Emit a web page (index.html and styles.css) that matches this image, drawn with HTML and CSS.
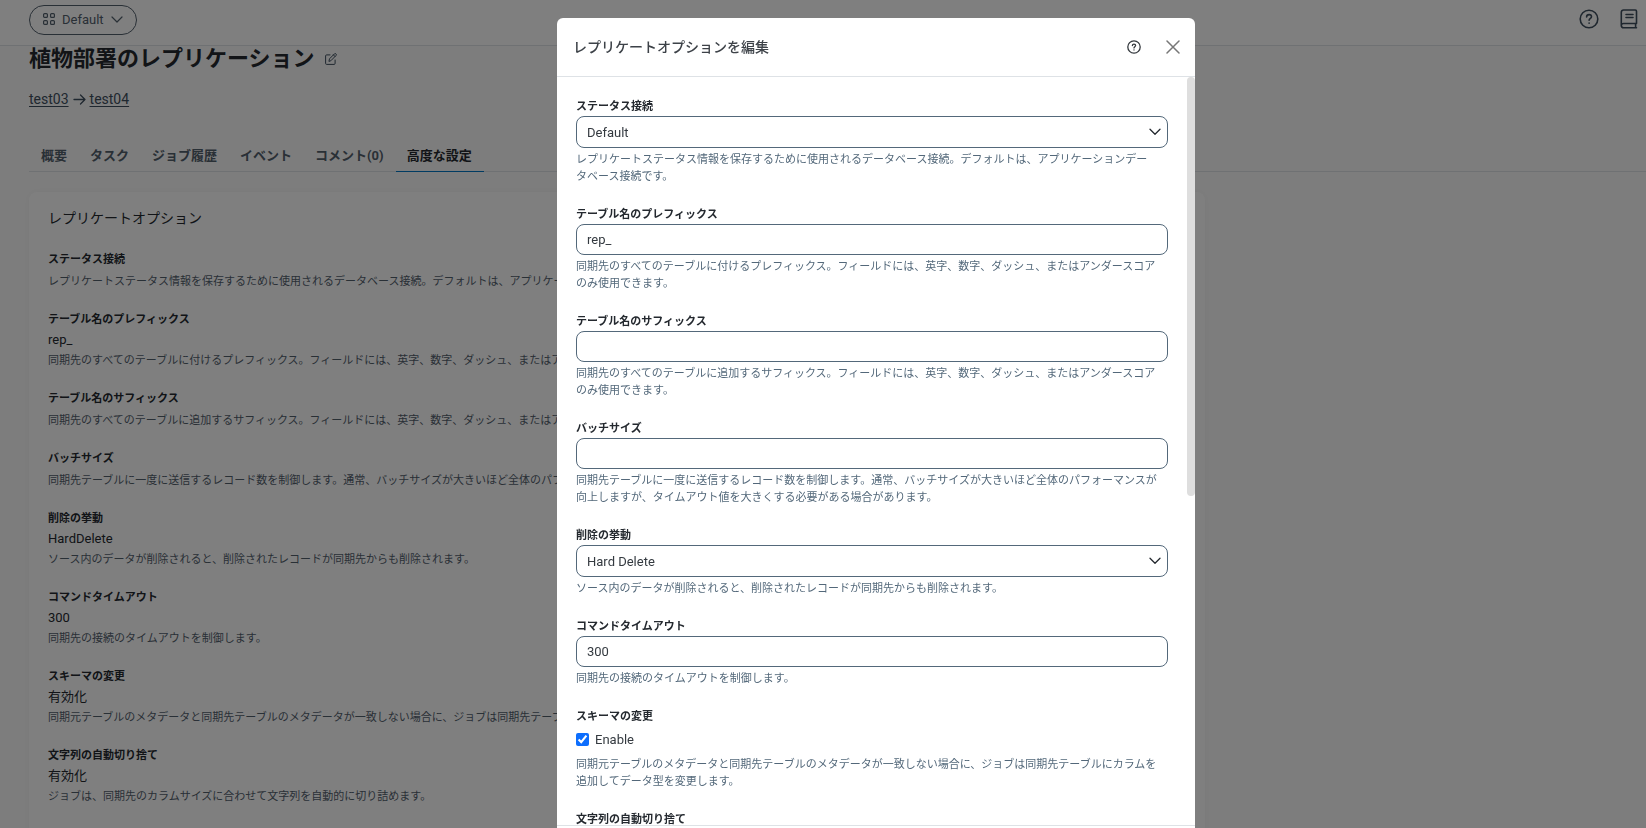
FILE: index.html
```html
<!DOCTYPE html>
<html lang="ja">
<head>
<meta charset="utf-8">
<title>植物部署のレプリケーション</title>
<link rel="stylesheet" href="styles.css">
</head>
<body>
<div class="page">
  <header class="topbar">
    <button class="workspace" type="button">
      <svg width="12" height="12" viewBox="0 0 12 12" fill="none" stroke="currentColor" stroke-width="1.2"><rect x=".6" y=".6" width="3.8" height="3.8" rx="1"/><rect x="7.6" y=".6" width="3.8" height="3.8" rx="1"/><rect x=".6" y="7.6" width="3.8" height="3.8" rx="1"/><rect x="7.6" y="7.6" width="3.8" height="3.8" rx="1"/></svg>
      <span>Default</span>
      <svg width="12" height="12" viewBox="0 0 12 12" fill="none" stroke="currentColor" stroke-width="1.2" stroke-linecap="round" stroke-linejoin="round"><path d="M1 4l5 5 5-5"/></svg>
    </button>
    <div class="topbar-actions">
      <button class="icon-button" type="button" aria-label="ヘルプ">
        <svg width="20" height="20" viewBox="0 0 20 20" fill="none" stroke="currentColor" stroke-width="1.6" stroke-linecap="round"><circle cx="10" cy="10" r="8.8"/><path d="M7.6 7.9c0-1.4 1.1-2.3 2.5-2.3s2.4.9 2.4 2.1c0 1.6-2.4 1.8-2.4 3.6M10.1 14v.3"/></svg>
      </button>
      <button class="icon-button" type="button" aria-label="ドキュメント">
        <svg width="18" height="20" viewBox="0 0 18 20" fill="none" stroke="currentColor" stroke-width="1.6" stroke-linecap="round" stroke-linejoin="round"><path d="M16.5 14.5V2.2a1.2 1.2 0 0 0-1.2-1.2H3.5a2.2 2.2 0 0 0-2.2 2.2v13.3a2.2 2.2 0 0 0 2.2 2.3h13M1.3 16.6a2.2 2.2 0 0 1 2.2-2.1h13M15.6 14.7v4M6 5.5h7M6 8.5h7"/></svg>
      </button>
    </div>
  </header>
  <main class="content">
    <div class="title-row">
      <h1>植物部署のレプリケーション</h1>
      <button class="icon-button" type="button" aria-label="名前を編集">
        <svg width="12" height="12" viewBox="0 0 12 12" fill="none" stroke="currentColor" stroke-linecap="round" stroke-linejoin="round"><path d="M5 1.9H1.6a1 1 0 0 0-1 1v7.5a1 1 0 0 0 1 1h7.5a1 1 0 0 0 1-1V7M4 8l.5-2.2L9.4.9a1 1 0 0 1 1.6 1.6L6.1 7.5zM8.4 1.9l1.6 1.6"/></svg>
      </button>
    </div>
    <div class="route">
      <a href="#source">test03</a>
      <svg width="13" height="13" viewBox="0 0 13 13" fill="none" stroke="currentColor" stroke-width="1.3" stroke-linecap="round" stroke-linejoin="round"><path d="M1 6.5h11M7.5 2l4.5 4.5L7.5 11"/></svg>
      <a href="#target">test04</a>
    </div>
    <nav class="tabs">
      <a href="#t1">概要</a><a href="#t2">タスク</a><a href="#t3">ジョブ履歴</a><a href="#t4">イベント</a><a href="#t5">コメント(0)</a><a class="active" href="#t6">高度な設定</a>
    </nav>
    <div class="columns">
      <section class="card">
        <h2>レプリケートオプション</h2>
        <dl>
          <div class="option"><dt>ステータス接続</dt><dd class="note">レプリケートステータス情報を保存するために使用されるデータベース接続。デフォルトは、アプリケーションデータベース接続です。</dd></div>
          <div class="option"><dt>テーブル名のプレフィックス</dt><dd class="value">rep_</dd><dd class="note">同期先のすべてのテーブルに付けるプレフィックス。フィールドには、英字、数字、ダッシュ、またはアンダースコアのみ使用できます。</dd></div>
          <div class="option"><dt>テーブル名のサフィックス</dt><dd class="note">同期先のすべてのテーブルに追加するサフィックス。フィールドには、英字、数字、ダッシュ、またはアンダースコアのみ使用できます。</dd></div>
          <div class="option"><dt>バッチサイズ</dt><dd class="note">同期先テーブルに一度に送信するレコード数を制御します。通常、バッチサイズが大きいほど全体のパフォーマンスが向上しますが、タイムアウト値を大きくする必要がある場合があります。</dd></div>
          <div class="option"><dt>削除の挙動</dt><dd class="value">HardDelete</dd><dd class="note">ソース内のデータが削除されると、削除されたレコードが同期先からも削除されます。</dd></div>
          <div class="option"><dt>コマンドタイムアウト</dt><dd class="value">300</dd><dd class="note">同期先の接続のタイムアウトを制御します。</dd></div>
          <div class="option"><dt>スキーマの変更</dt><dd class="value">有効化</dd><dd class="note">同期元テーブルのメタデータと同期先テーブルのメタデータが一致しない場合に、ジョブは同期先テーブルにカラムを追加してデータ型を変更します。</dd></div>
          <div class="option"><dt>文字列の自動切り捨て</dt><dd class="value">有効化</dd><dd class="note">ジョブは、同期先のカラムサイズに合わせて文字列を自動的に切り詰めます。</dd></div>
          <div class="option"><dt>レコードのバッチ</dt></div>
        </dl>
      </section>
    </div>
  </main>
</div>

<div class="overlay">
  <div class="dialog" role="dialog" aria-modal="true" aria-labelledby="dialog-title">
    <header class="dialog-header">
      <h2 id="dialog-title">レプリケートオプションを編集</h2>
      <button class="icon-button help" type="button" aria-label="ヘルプ">
        <svg width="14" height="14" viewBox="0 0 14 14" fill="none" stroke="currentColor" stroke-width="1.3" stroke-linecap="round"><circle cx="7" cy="7" r="6.2"/><path d="M5.4 5.6c0-1 .7-1.5 1.6-1.5s1.6.6 1.6 1.4c0 1.1-1.6 1.2-1.6 2.4M7 9.8v.1"/></svg>
      </button>
      <button class="icon-button close" type="button" aria-label="閉じる">
        <svg width="14" height="14" viewBox="0 0 14 14" fill="none" stroke="currentColor" stroke-width="1.5" stroke-linecap="round"><path d="M1 1l12 12M13 1L1 13"/></svg>
      </button>
    </header>
    <form class="dialog-body">
      <div class="scroll-thumb"></div>
      <div class="field">
        <label for="f1">ステータス接続</label>
        <div class="select-box"><select id="f1"><option>Default</option></select><svg width="12" height="8" viewBox="0 0 12 8" fill="none" stroke="currentColor" stroke-width="1.3" stroke-linecap="round" stroke-linejoin="round"><path d="M1 1.2l5 5 5-5"/></svg></div>
        <p>レプリケートステータス情報を保存するために使用されるデータベース接続。デフォルトは、アプリケーションデー<br>タベース接続です。</p>
      </div>
      <div class="field">
        <label for="f2">テーブル名のプレフィックス</label>
        <input class="text" id="f2" type="text" value="rep_">
        <p>同期先のすべてのテーブルに付けるプレフィックス。フィールドには、英字、数字、ダッシュ、またはアンダースコア<br>のみ使用できます。</p>
      </div>
      <div class="field">
        <label for="f3">テーブル名のサフィックス</label>
        <input class="text" id="f3" type="text">
        <p>同期先のすべてのテーブルに追加するサフィックス。フィールドには、英字、数字、ダッシュ、またはアンダースコア<br>のみ使用できます。</p>
      </div>
      <div class="field">
        <label for="f4">バッチサイズ</label>
        <input class="text" id="f4" type="text">
        <p>同期先テーブルに一度に送信するレコード数を制御します。通常、バッチサイズが大きいほど全体のパフォーマンスが<br>向上しますが、タイムアウト値を大きくする必要がある場合があります。</p>
      </div>
      <div class="field">
        <label for="f5">削除の挙動</label>
        <div class="select-box"><select id="f5"><option>Hard Delete</option></select><svg width="12" height="8" viewBox="0 0 12 8" fill="none" stroke="currentColor" stroke-width="1.3" stroke-linecap="round" stroke-linejoin="round"><path d="M1 1.2l5 5 5-5"/></svg></div>
        <p>ソース内のデータが削除されると、削除されたレコードが同期先からも削除されます。</p>
      </div>
      <div class="field">
        <label for="f6">コマンドタイムアウト</label>
        <input class="text" id="f6" type="text" value="300">
        <p>同期先の接続のタイムアウトを制御します。</p>
      </div>
      <div class="field">
        <span class="group-label">スキーマの変更</span>
        <div class="check-row"><input id="f7" type="checkbox" checked><label for="f7">Enable</label></div>
        <p>同期元テーブルのメタデータと同期先テーブルのメタデータが一致しない場合に、ジョブは同期先テーブルにカラムを<br>追加してデータ型を変更します。</p>
      </div>
      <div class="field">
        <span class="group-label">文字列の自動切り捨て</span>
        <div class="check-row"><input id="f8" type="checkbox" checked><label for="f8">Enable</label></div>
      </div>
    </form>
    <footer class="dialog-footer"></footer>
  </div>
</div>
</body>
</html>
```

FILE: styles.css
```css
* { box-sizing: border-box; }

body {
  margin: 0;
  height: 100vh;
  overflow: hidden;
  background: #fbfbfb;
  color: #24292f;
  font-family: Roboto, "Noto Sans CJK JP", sans-serif;
  font-size: 13px;
}

h1, h2, p, dl, dt, dd { margin: 0; }
button, input, select { font: inherit; color: inherit; }
svg { display: block; flex: none; }

.icon-button {
  display: flex;
  padding: 0;
  border: 0;
  background: none;
  color: #3f4f5f;
}

.page { height: 100vh; overflow: hidden; }

.topbar {
  display: flex;
  align-items: flex-start;
  justify-content: space-between;
  height: 46px;
  padding: 5px 8px 0 29px;
  border-bottom: 1px solid #dee2e6;
  background: #fff;
}

.workspace {
  display: flex;
  align-items: center;
  gap: 7px;
  height: 30px;
  padding: 0 13px 2px;
  border: 1px solid #53606d;
  border-radius: 15px;
  background: none;
  color: #53606d;
}

.topbar-actions { display: flex; gap: 21px; padding-top: 4px; }

.content { padding-left: 29px; }

.title-row { display: flex; align-items: center; gap: 10px; }
h1 { font-size: 22px; line-height: 25px; font-weight: 700; }

.route {
  display: flex;
  align-items: center;
  gap: 4px;
  margin-top: 17px;
  font-size: 14px;
  line-height: 22px;
  color: #3f4f5f;
}
.route a { color: inherit; text-underline-offset: 2px; }

.tabs {
  display: flex;
  margin-top: 30px;
  padding-left: 1px;
  border-bottom: 1px solid #dee2e6;
}
.tabs a {
  padding: 5px 12px 5px 11px;
  margin-bottom: -1px;
  border-bottom: 1px solid transparent;
  line-height: 21px;
  font-weight: 700;
  color: #53606d;
  text-decoration: none;
}
.tabs .active { border-color: #0077c5; color: #24292f; }

.columns { display: grid; grid-template-columns: 8fr 3fr; margin-top: 20px; }

.card {
  padding: 15px 19px;
  border-radius: 8px;
  background: #fff;
  box-shadow: 0 0 8px rgba(0, 0, 0, .04);
}
.card h2 { margin-bottom: 21px; font-size: 14px; line-height: 22px; font-weight: 400; }

.option { margin-bottom: 18px; }
.option dt { font-size: 11px; line-height: 20px; font-weight: 700; }
.option .value { line-height: 19px; }
.option .note { margin-top: 2px; font-size: 11px; line-height: 20px; color: #53606d; }

.overlay {
  position: fixed;
  inset: 0;
  display: flex;
  justify-content: center;
  padding: 18px 0 0 106px;
  background: rgba(0, 0, 0, .5);
}

.dialog {
  display: flex;
  flex-direction: column;
  width: 638px;
  border-radius: 6px 6px 0 0;
  background: #fff;
  overflow: hidden;
}

.dialog-header {
  display: flex;
  flex: none;
  align-items: center;
  height: 59px;
  padding: 0 15px 0 16px;
  border-bottom: 1px solid #dee2e6;
}
.dialog-header h2 { flex: 1; padding-bottom: 2px; font-size: 14px; font-weight: 500; color: #3d4248; }
.dialog-header .help { margin-right: 25px; color: #33383d; }
.dialog-header .close { color: #777; }

.dialog-body {
  position: relative;
  flex: 1;
  min-height: 0;
  padding: 21px 27px 0 19px;
  overflow: hidden;
}

.scroll-thumb {
  position: absolute;
  top: 0;
  right: 0;
  width: 8px;
  height: 56%;
  border-radius: 4px;
  background: #dedede;
}

.field { display: flex; flex-direction: column; gap: 1px; margin-bottom: 21px; }
.field > label, .group-label { font-size: 11px; line-height: 17px; font-weight: 700; }
.field p { margin-top: 2px; font-size: 11px; line-height: 17px; color: #53687a; }

.text, .select-box select {
  width: 100%;
  height: 31px;
  padding: 0 10px;
  border: 1px solid #53687a;
  border-radius: 8px;
  background: #fff;
  color: #343a40;
}

.select-box { display: grid; align-items: center; }
.select-box select { grid-area: 1 / 1; height: 32px; appearance: none; }
.select-box svg { grid-area: 1 / 1; justify-self: end; margin-right: 7px; pointer-events: none; }

.check-row { display: flex; align-items: center; gap: 6px; height: 27px; color: #343a40; }
.check-row input { width: 13px; height: 13px; margin: 0; accent-color: #0d6efd; }

.dialog-footer { flex: none; height: 3px; border-top: 1px solid #dee2e6; }
```
